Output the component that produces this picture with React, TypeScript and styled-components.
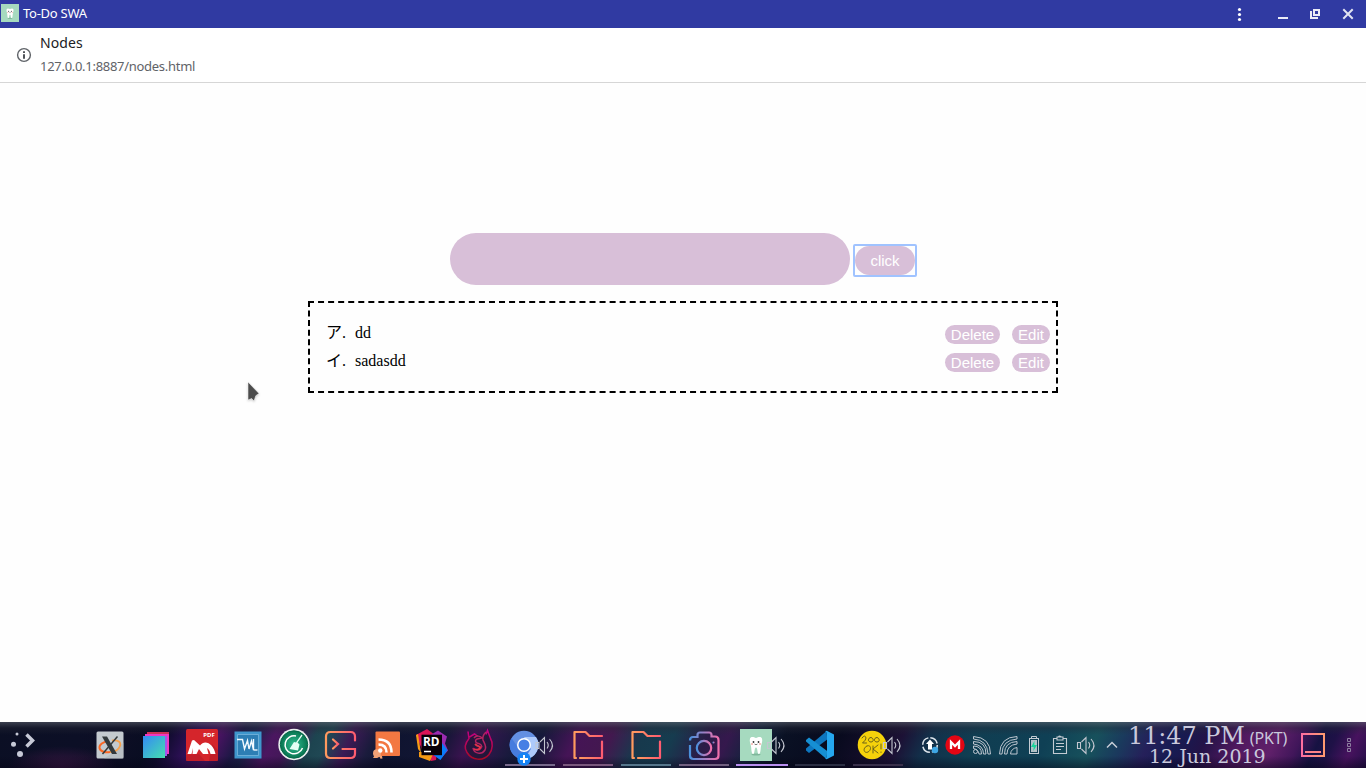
import React from "react";
import styled, { createGlobalStyle } from "styled-components";

const GlobalStyle = createGlobalStyle`
  body { margin: 0; background: #fff; overflow: hidden; }
  *, *::before, *::after { box-sizing: border-box; }
`;

const Screen = styled.div`
  width: 1366px;
  height: 768px;
  display: flex;
  flex-direction: column;
  position: relative;
  background: #fefefe;
`;

/* window chrome */
const TitleBar = styled.header`
  flex: none;
  height: 28px;
  display: flex;
  align-items: flex-start;
  background: #303aa2;
  color: #fff;
  font: 13px/18px "Noto Sans", sans-serif;
`;
const AppIcon = styled.svg`
  margin: 4px 4px 0 1px;
  display: block;
`;
const WindowTitle = styled.div`
  flex: 1;
  padding-top: 4px;
  letter-spacing: -0.25px;
`;
const WindowControls = styled.svg`
  display: block;
`;
const AddressBar = styled.div`
  flex: none;
  height: 55px;
  display: flex;
  background: #fff;
  border-bottom: 1px solid #d6d6d6;
  font-family: "Noto Sans", sans-serif;
`;
const InfoIcon = styled.svg`
  margin: 19px 8px 0 16px;
`;
const PageInfo = styled.div`
  padding-top: 5px;
`;
const PageTitle = styled.div`
  font-size: 14px;
  line-height: 20px;
  letter-spacing: 0.1px;
  color: #202124;
`;
const PageUrl = styled.div`
  margin-top: 4px;
  font-size: 13px;
  line-height: 19px;
  letter-spacing: -0.29px;
  color: #5f6368;
`;

/* page */
const Page = styled.main`
  flex: 1;
  padding-top: 150px;
  display: flex;
  flex-direction: column;
  align-items: center;
`;
const Form = styled.form`
  display: flex;
  gap: 5px;
  height: 52px;
  padding-right: 1px;
`;
const TextField = styled.input`
  width: 400px;
  height: 52px;
  border: 0;
  padding: 0 20px;
  border-radius: 26px;
  background: #d8bfd8;
  outline: none;
`;
const Pill = styled.button`
  border: 0;
  padding: 0;
  background: #d8bfd8;
  color: #fff;
  font: 15px/17px "Liberation Sans", Arial, sans-serif;
`;
const SubmitButton = styled(Pill)`
  width: 60px;
  height: 29px;
  margin-top: 13px;
  border-radius: 15px;
  position: relative;
  outline: none;
  &::after {
    content: "";
    position: absolute;
    inset: -2px;
    border: 2px solid #a0c3ff;
    border-radius: 2px;
  }
`;
const List = styled.ol`
  list-style: none;
  width: 750px;
  height: 92px;
  margin: 16px 0 0;
  padding: 16px 6px 16px 16px;
  border: 2px dashed #000;
  font: 16px/28px "Liberation Serif", "Noto Sans CJK JP", serif;
  color: #000;
`;
const Item = styled.li`
  height: 28px;
  display: flex;
  align-items: flex-start;
`;
const Marker = styled.span`
  width: 29px;
  white-space: pre;
`;
const Label = styled.span`
  flex: 1;
`;
const RowButton = styled(Pill)<{ $width: number }>`
  width: ${(p) => p.$width}px;
  height: 19px;
  line-height: 19px;
  margin: 6px 0 0 12px;
  border-radius: 9.5px;
`;
const Pointer = styled.svg`
  position: absolute;
  left: 245px;
  top: 379px;
  filter: drop-shadow(0 1px 1px rgba(0, 0, 0, 0.2));
`;

/* taskbar */
const Taskbar = styled.footer`
  flex: none;
  height: 46px;
  display: flex;
  background:
    linear-gradient(180deg, rgba(90, 95, 105, 0.6) 0, rgba(40, 42, 55, 0.35) 6px, transparent 13px, transparent 34px, rgba(5, 3, 20, 0.45) 46px),
    radial-gradient(55px 22px at 62px 46px, rgba(72, 25, 75, 0.75), transparent),
    linear-gradient(115deg, #0b0f24 0, #0c0f26 6%, #0d0e25 9%, #090d22 11.5%, #100c2d 12.5%, #30105a 14.5%, #4a1362 16.2%, #1d1845 17.8%, #1c2048 18.6%, #4b1660 20.2%, #431858 21.5%, #1d4450 23.2%, #204854 24.2%, #3c1a55 25.8%, #1a1b3c 27.5%, #0f1430 29%, #121634 32.5%, #3b1350 34.5%, #2d174a 36%, #161a3b 38%, #15193a 39.5%, #451456 42%, #43184f 44.5%, #17394d 46.8%, #163c4f 49%, #2b1c47 51.5%, #35184d 53%, #14233d 55%, #0a1124 57%, #080a1e 61%, #160e2b 64%, #1c1135 65.5%, #12304a 67.5%, #103e52 71%, #0f4055 76%, #17515c 79.5%, #1a3a5d 81.5%, #25205a 83.5%, #161b52 85.5%, #231347 87.5%, #50185f 90%, #60206a 92.5%, #41165a 94.3%, #161242 95.7%, #1f1147 96.8%, #47125e 98.3%, #250f49 100%);
`;
const Glyph = styled.svg`
  display: block;
  flex: none;
`;
const Task = styled.div<{ $line: string; $active?: boolean }>`
  flex: none;
  width: 58px;
  height: 46px;
  background: linear-gradient(${(p) => p.$line}, ${(p) => p.$line}) no-repeat
    ${(p) => (p.$active ? "3px 42px / 52px 2px" : "4px 42px / 50px 2px")};
`;
const Tray = styled.div`
  display: flex;
  margin-left: 10px;
`;
const Clock = styled.div`
  width: 167px;
  padding-left: 3px;
  color: #c9c9dc;
`;
const TimeLine = styled.div`
  height: 26px;
  padding-top: 1px;
  display: flex;
  align-items: baseline;
  gap: 5px;
  white-space: nowrap;
  letter-spacing: -0.1px;
  font: 24px/26px "DejaVu Serif", serif;
`;
const Zone = styled.span`
  font: 16px/20px "Noto Sans", sans-serif;
`;
const DateLine = styled.div`
  font: 19px/20px "DejaVu Serif", serif;
  margin-top: -2px;
  padding-left: 21px;
  white-space: nowrap;
`;

const Gradients = () => (
  <svg width="0" height="0" style={{ position: "absolute" }}>
    <defs>
      <linearGradient id="coral"><stop stopColor="#ff9a5e" /><stop offset="1" stopColor="#ff5c70" /></linearGradient>
      <linearGradient id="cam"><stop stopColor="#4a91dc" /><stop offset="1" stopColor="#ef6fab" /></linearGradient>
      <linearGradient id="card" x2="1" y2="1"><stop stopColor="#3489f5" /><stop offset="1" stopColor="#45dfae" /></linearGradient>
      <linearGradient id="desk"><stop stopColor="#ff6fa0" /><stop offset="1" stopColor="#ff9a70" /></linearGradient>
      <radialGradient id="green"><stop stopColor="#30bd91" /><stop offset="1" stopColor="#07744f" /></radialGradient>
      <linearGradient id="fox" x2="0" y2="1"><stop stopColor="#c50086" /><stop offset="1" stopColor="#a70a24" /></linearGradient>
    </defs>
  </svg>
);

const Audio = ({ x = 34 }: { x?: number }) => (
  <g transform={`translate(${x} 14)`} fill="none" stroke="#c3c6d0" strokeWidth="1.1">
    <path d="M.5 6.500h3v6h-3zM4.500 6l4.500-4.500v16l-4.500-4.500" />
    <path d="M11.500 6q2.500 3.200 0 6.500M14 3q6 6.500 0 13" />
  </g>
);

const Tooth = () => (
  <g>
    <rect width="32" height="32" fill="#a6dabf" />
    <ellipse cx="16" cy="25.500" rx="4.500" ry="1" fill="#7fb79b" />
    <path d="M10 9.500c1.500-2.500 4-1 6-.5 2-.5 4.500-2 6 .5 1 3-1 6-1.200 9-.3 4-.6 6.500-2 6.500-1.700 0-1-6.500-2.800-6.500s-1.100 6.500-2.800 6.500c-1.400 0-1.700-2.500-2-6.500-.2-3-2.200-6-1.200-9z" fill="#fff" />
    <circle cx="13.500" cy="13" r=".9" fill="#333" /><circle cx="18.500" cy="13" r=".9" fill="#333" />
    <path d="M14.500 15q1.500 1.500 3 0" fill="none" stroke="#444" strokeWidth=".7" />
    <circle cx="12" cy="15" r=".9" fill="#f3a6a0" /><circle cx="20" cy="15" r=".9" fill="#f3a6a0" />
  </g>
);

const launchers: React.ReactNode[] = [
  <g>
    <rect x="9.500" y="9.500" width="27" height="27" rx="1.500" fill="#c4cacf" />
    <path d="M26 31l10.500-10.500V36.500H17z" fill="#adb4b9" opacity=".5" />
    <path d="M22 19c-6 .5-10 4-9.500 7s5 5 10.500 4" fill="none" stroke="#fa6725" strokeWidth="2" />
    <path d="M25 18.500c6-.8 9.500 1.500 8 5.500s-5 6-10 6" fill="none" stroke="#f7a14d" strokeWidth="1.800" />
    <path d="M15 14.500h5l10 17.500h-5z" fill="#33393c" />
    <path d="M30.500 14.500L15.500 32" stroke="#33393c" strokeWidth="1.500" />
  </g>,
  <g>
    <path d="M14 10h22v22H14z" fill="#ce3157" /><path d="M12 12h24v20h-2v2H12z" fill="#ee38c3" />
    <path d="M32 14h2v20H12v-2h20z" fill="#9a5bed" /><path d="M10 14h22v22H10z" fill="url(#card)" />
  </g>,
  <g>
    <rect x="7" y="7" width="32" height="32" rx="1.500" fill="#d5252b" />
    <path d="M20 32l6 7H8.500Q7 39 7 37.500V33zM33 22l6 6v9.500q0 1.500-1.500 1.500H30z" fill="#b51b28" opacity=".6" />
    <path d="M8.500 32L13 18.500l2-.5 6 5.500c5-7 14-1 15.500 8.500h-5c-.5-3-1.800-5-3.500-6l1.500 6h-5.500l-4-5-2.500 5h-4l.5-6-1.500 6z" fill="#fff" />
    <text x="24.300" y="14.700" fontFamily="Noto Sans" fontWeight="bold" fontSize="6" fill="#fff">PDF</text>
  </g>,
  <g>
    <rect x="9.500" y="9.500" width="27" height="27" fill="#3f97cd" />
    <path d="M12.500 12.500h21v21h-21z" fill="#2d7eb4" stroke="#8fc5e6" strokeWidth=".6" />
    <path d="M12 17.500h5.500l2 9.500 3-8.500 1.500 8.500 2.500-8 2 9V17" fill="none" stroke="#f3faff" strokeWidth="1.400" />
    <path d="M28.500 28h4" stroke="#f3faff" strokeWidth="1.400" />
  </g>,
  <g>
    <circle cx="23" cy="22.500" r="15.700" fill="#e8eded" /><circle cx="23" cy="22.500" r="13.700" fill="url(#green)" stroke="#06694a" />
    <path d="M25 14a9 9 0 1 0 6.500 12" fill="none" stroke="#fff" strokeWidth="1.500" />
    <path d="M30.500 12.500l1 1-5 7 2 2-1.500 6-8.500-1.500 4.500-7 2 .5z" fill="#e5fff5" />
  </g>,
  <g fill="none" stroke="url(#coral)" strokeWidth="2.200" strokeLinecap="round">
    <path d="M38 18.500v-4q0-4.500-4.500-4.500H13.500q-4.500 0-4.500 4.500v17Q9 36 13.500 36H33.500q4.500 0 4.500-4.500V27H25.500" />
    <path d="M16 17.500l5 4.500-5 4.500" />
  </g>,
  <g>
    <rect x="12.500" y="9.500" width="24.500" height="24.500" rx="1" fill="#f37842" />
    <path d="M10 36l3-5 6 3 .5 2.500-2 .2-1-2-2.500 1.300z" fill="#f5a273" /><circle cx="14" cy="31.200" r="4" fill="#f2a177" />
    <circle cx="17.300" cy="28.500" r="2.200" fill="#fff" />
    <path d="M15.500 22.500q8 0 8 8M15.500 17.500q13 0 13 13" fill="none" stroke="#fff" strokeWidth="2.600" />
  </g>,
  <g>
    <path d="M7 13l11-6 12 9-3 22-5 1-8-9z" fill="#db1557" /><path d="M7 13l2-1 3 19-3-4z" fill="#f59a17" />
    <path d="M20 14l9-5.500 9 6-2 7 3 7-8 9-8-6z" fill="#9a2bb0" /><path d="M33 21l5.500 7-7 10-7-5z" fill="#087cfa" />
    <path d="M10 30h15l-4 9-11-4z" fill="#f69a13" />
    <rect x="12.500" y="12.700" width="20.500" height="20.500" fill="#080008" />
    <text x="14" y="23.500" fontFamily="Open Sans" fontWeight="bold" fontSize="11.800" fill="#fff">RD</text>
    <path d="M15 29.500h7" stroke="#fff" strokeWidth="1.500" />
  </g>,
  <g>
    <path d="M14.500 9.500l1 4q6-3 12 0l7-4 .5 7c3 5 3 12-1 16-6 6-15 6-20 0-5-5-4-13-.5-17z" fill="#17152b" fillOpacity=".5" />
    <path d="M13 9.500l1 7c-5 6-4 11-2 14 5 8 16 9 22 2 4-5 4-12 1.500-16l-3-8-1.500 4M14.500 15l5-3 3 2" stroke="url(#fox)" strokeWidth="1.500" fill="none" />
    <path d="M19 16c2-3 7-2 8 0l-5 1c-2 1-2 3 0 4 4 1 6 3 4 5-2 3-7 2-8 0 1 6 9 7 12 2 2-4-1-7-2-10-1-4 1-6 3-8" fill="none" stroke="#b32462" strokeWidth="1.500" />
    <path d="M20 22c3 3 6 2 5 4s-4 2-6 1" fill="none" stroke="#e3314a" strokeWidth="1.800" />
  </g>,
];

const Folder = () => (
  <g fill="none" stroke="url(#coral)" strokeWidth="2.200" strokeLinejoin="round" strokeLinecap="round">
    <path d="M43 14H30.500l-4-4H15.500v26h1.500" />
    <path d="M21 36h22V19.500" />
  </g>
);

const tasks: { line: string; active?: boolean; art: React.ReactNode }[] = [
  {
    line: "#77698b",
    art: (
      <g>
        <circle cx="23" cy="23" r="14.300" fill="#638fe2" />
        <path d="M10.500 16a14.300 14.300 0 0 0 13 21.300l6-11-6 3-6-3z" fill="#477cde" />
        <path d="M23 15h12a14.300 14.300 0 0 1-11.500 22.300L30 27z" fill="#adc9fa" />
        <circle cx="23" cy="23" r="7" fill="#fff" /><circle cx="23" cy="23" r="5.500" fill="#477fe4" />
        <Audio x={34.5} />
        <circle cx="23" cy="37" r="6.700" fill="#1684f5" /><path d="M19 37h8M23 33v8" stroke="#fff" strokeWidth="2" />
      </g>
    ),
  },
  { line: "#7a587d", art: <Folder /> },
  { line: "#55768b", art: <Folder /> },
  {
    line: "#716080",
    art: (
      <g fill="none" stroke="url(#cam)" strokeWidth="2.200">
        <path d="M15 23v10.500q0 3.500 3.500 3.500h21.500q3.500 0 3.500-3.500V18q0-3.500-3.500-3.500h-3.500V13q0-2.500-2.500-2.500H25q-2.500 0-2.500 2.500v2H18q-3 0-3 3.500" />
        <circle cx="29" cy="26" r="7.200" /><circle cx="38.500" cy="20.500" r=".5" strokeWidth="1.200" />
      </g>
    ),
  },
  { line: "#b98ff0", active: true, art: <g><g transform="translate(7 7)"><Tooth /></g><Audio /></g> },
  {
    line: "#2b2e43",
    art: (
      <g>
        <path d="M15 26.500L35.700 9l.5 8.500L18 31l-3-2.500z" fill="#0d76bf" />
        <path d="M15 19.500v-1.500L18 15.500l18.200 13.500-.5 8.200z" fill="#168fd3" />
        <path d="M35.700 8.700L43 12.500v21L35.700 37.200 34 36.500q2 0 2-2v-23q0-2-2-2z" fill="#25a7ef" />
      </g>
    ),
  },
  {
    line: "#39304b",
    art: (
      <g>
        <circle cx="23" cy="23" r="14.300" fill="#f5d20b" />
        <g fill="none" stroke="#6b621a" strokeWidth="1" strokeLinecap="round">
          <path d="M13 16q3-4 4 0 0 2-3.500 5h4M22 15.500c-3.500 0-3.500 4.500 0 4.500s2.500-4.500 0-4.500M28 15.500c-3.500 0-3.500 4.500 0 4.500s2.500-4.500 0-4.500M18 24c-5 2-3 8 1 6s3-8-1-6M24 24v7M29 23l-5 4 5 4M32 22v5M32 30v.4" />
        </g>
        <Audio />
      </g>
    ),
  },
];

const tray: React.ReactNode[] = [
  <g>
    <circle cx="13" cy="23" r="7.300" fill="none" stroke="#dde5ec" strokeWidth="1.500" strokeDasharray="9.500 2" />
    <path d="M13 17.500l4 4.500h-2v5.500h-4V22H9z" fill="#fff" /><circle cx="18" cy="28" r="3.200" fill="#3da7e5" />
  </g>,
  <g>
    <circle cx="12" cy="23" r="9.700" fill="#e30613" /><path d="M8 27v-7l4 4 4-4v7" fill="none" stroke="#fff" strokeWidth="2.300" />
  </g>,
  <g fill="none" stroke="#bcc5cf" strokeWidth="1">
    <circle cx="6.500" cy="29.500" r="2" />
    <path d="M4.500 24q8 0 8 8h-2.500q-.5-4.500-5.500-5.500zM4.500 19.500q12.500 0 12.500 12.500h-2.500q0-9-10-10zM4.500 14.500q17 1 17 17.500H19Q18.500 18 4.500 17z" />
  </g>,
  <g fill="none" stroke="#bcc5cf" strokeWidth="1">
    <path d="M22 14.500Q5 15 4.500 32H7Q7 18 22 17zM22 19.500Q9.500 20 9.500 32H12q0-9 10-10zM22 25.500q-6 1-6.500 6.500H22z" />
  </g>,
  <g fill="none" stroke="#c3cbd3">
    <path d="M10.500 16.500v-2h5v2" /><rect x="8.500" y="16.500" width="9" height="15" />
    <rect x="10" y="18" width="6" height="12" fill="#b4c0c7" stroke="none" />
    <path d="M13.500 19l-3.500 6h2.700l-.4 4 3.700-6h-2.700z" fill="#19d49a" stroke="none" />
  </g>,
  <g fill="none" stroke="#c3cbd3" strokeWidth="1.100">
    <path d="M10 16.500H6.500v15h13v-15H16M10 15h6v3h-6zM11.500 15q0-2 3 0M9 21.500h8M9 24.500h8M9 27.500h5" />
  </g>,
  <Audio x={4} />,
  <path d="M8 25.500l5-5 5 5" fill="none" stroke="#c7cdd7" strokeWidth="1.500" />,
];

const items = [
  { marker: "ア.", label: "dd" },
  { marker: "イ.", label: "sadasdd" },
];

export default function App() {
  return (
    <Screen>
      <GlobalStyle />
      <Gradients />
      <TitleBar>
        <AppIcon width="18" height="18" viewBox="0 0 32 32"><Tooth /></AppIcon>
        <WindowTitle>To-Do SWA</WindowTitle>
        <WindowControls width="160" height="28" viewBox="0 0 160 28">
          <g fill="#fff"><circle cx="33.500" cy="9.500" r="1.600" /><circle cx="33.500" cy="14.500" r="1.600" /><circle cx="33.500" cy="19.500" r="1.600" /></g>
          <path d="M72 17h10v2H72zM104 11h2v6h6v2h-8z" fill="#eaebf6" />
          <path d="M108 10h5v5h-5z" fill="none" stroke="#eaebf6" strokeWidth="2" />
          <path d="M138 10l8 8M146 10l-8 8" stroke="#e2e4f2" strokeWidth="2" strokeLinecap="square" />
        </WindowControls>
      </TitleBar>
      <AddressBar>
        <InfoIcon width="16" height="16" viewBox="0 0 16 16">
          <circle cx="8" cy="8" r="6.400" fill="none" stroke="#5f6368" strokeWidth="1.400" />
          <path d="M7 7.200h2v4.600H7zM7 4.200h2v1.800H7z" fill="#4f5358" />
        </InfoIcon>
        <PageInfo>
          <PageTitle>Nodes</PageTitle>
          <PageUrl>127.0.0.1:8887/nodes.html</PageUrl>
        </PageInfo>
      </AddressBar>
      <Page>
        <Form>
          <TextField />
          <SubmitButton type="button">click</SubmitButton>
        </Form>
        <List>
          {items.map((item) => (
            <Item key={item.label}>
              <Marker>{item.marker}</Marker>
              <Label>{item.label}</Label>
              <RowButton $width={55}>Delete</RowButton>
              <RowButton $width={38}>Edit</RowButton>
            </Item>
          ))}
        </List>
      </Page>
      <Taskbar>
        <Glyph width="87" height="46">
          <g fill="#c7cad7"><circle cx="17" cy="12" r="1.500" /><circle cx="13.500" cy="22.300" r="2.500" /><circle cx="20" cy="32" r="3" /></g>
          <path d="M26.500 12.500l6 6-6 6" fill="none" stroke="#c7cad7" strokeWidth="3.500" />
        </Glyph>
        {launchers.map((art, i) => <Glyph key={i} width="46" height="46">{art}</Glyph>)}
        {tasks.map((t, i) => (
          <Task key={i} $line={t.line} $active={t.active}>
            <Glyph width="58" height="46">{t.art}</Glyph>
          </Task>
        ))}
        <Tray>
          {tray.map((art, i) => <Glyph key={i} width="26" height="46">{art}</Glyph>)}
        </Tray>
        <Clock>
          <TimeLine>11:47 PM<Zone>(PKT)</Zone></TimeLine>
          <DateLine>12 Jun 2019</DateLine>
        </Clock>
        <Glyph width="74" height="46">
          <path d="M10 12h22v22H10z" fill="none" stroke="url(#desk)" strokeWidth="2" />
          <path d="M13 29h16v2H13z" fill="#ff8388" />
          <g fill="none" stroke="#8d7ea0"><path d="M55.500 16.500h3v3h-3zM55.500 21.500h3v3h-3zM55.500 26.500h3v3h-3z" /></g>
        </Glyph>
      </Taskbar>
      <Pointer width="18" height="26" viewBox="0 0 18 26">
        <path d="M3 3l11 11.500-3.200 2.200-1.800 5.300-2.300-2.500L3 21z" fill="#4c4c4c" stroke="#fff" strokeWidth=".5" />
      </Pointer>
    </Screen>
  );
}
